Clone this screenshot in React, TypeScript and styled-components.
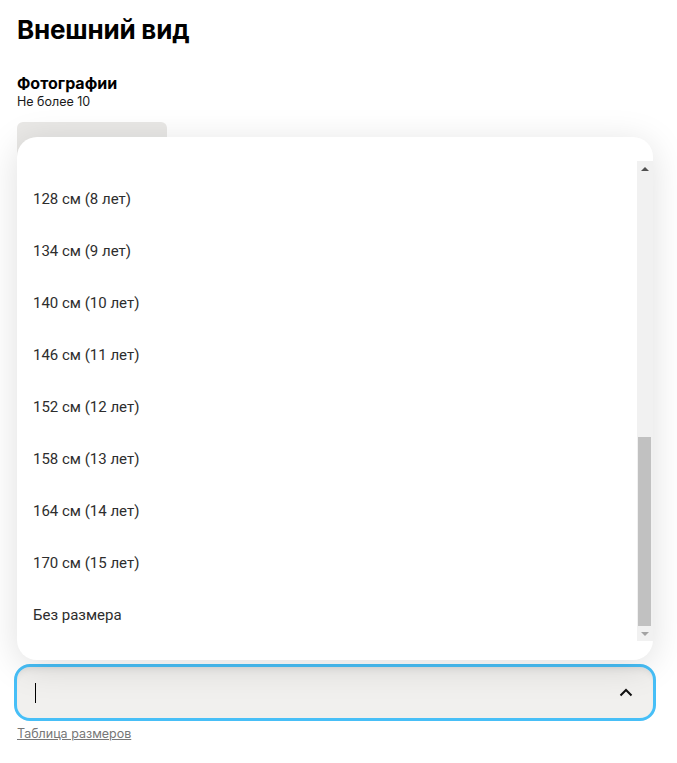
import React, { useLayoutEffect, useRef, useState } from "react";
import styled, { createGlobalStyle } from "styled-components";

const Global = createGlobalStyle`
  html, body { margin: 0; padding: 0; background: #ffffff; }
  body { font-family: Roboto, "Noto Sans", Arial, sans-serif; color: #111; }
  * { box-sizing: border-box; }
`;

const Page = styled.div`
  padding: 13px 24px 0 17px;
  width: 677px;
`;

const Title = styled.h1`
  margin: 0;
  font-family: Inter, Roboto, sans-serif;
  font-size: 26px;
  line-height: 34px;
  font-weight: 700;
  letter-spacing: -0.2px;
  color: #000;
`;

const Section = styled.section`
  margin-top: 26px;
  display: flex;
  flex-direction: column;
`;

const Label = styled.div`
  font-family: Inter, Roboto, sans-serif;
  font-size: 16px;
  line-height: 20px;
  font-weight: 700;
  color: #000;
`;

const Hint = styled.div`
  font-family: Inter, Roboto, sans-serif;
  font-size: 12.5px;
  line-height: 16px;
  color: #1a1a1a;
  margin-top: 1px;
`;

const Tile = styled.div`
  margin-top: 12px;
  width: 150px;
  height: 150px;
  border-radius: 6px;
  background: #e9e8e6;
`;

const SizeField = styled.div`
  position: relative;
  margin-top: 392px;
  display: flex;
  flex-direction: column;
`;

const Panel = styled.div`
  position: absolute;
  left: 0;
  right: 0;
  bottom: calc(100% - 3px);
  margin-bottom: 7px;
  background: #fff;
  border-radius: 20px;
  padding: 24px 0 19px 0;
  box-shadow: 0 6px 36px rgba(0, 0, 0, 0.13);
  z-index: 5;
`;

const PanelBody = styled.div`
  display: flex;
  height: 480px;
`;

const List = styled.div`
  flex: 1;
  overflow-y: scroll;
  scrollbar-width: none;
  &::-webkit-scrollbar { display: none; }
`;

const Option = styled.div`
  height: 52px;
  display: flex;
  align-items: center;
  padding-left: 16px;
  font-family: Roboto, "Noto Sans", sans-serif;
  font-size: 15px;
  color: #2d2d2d;
`;

const ScrollBar = styled.div`
  width: 16px;
  background: #f1f1f1;
  display: flex;
  flex-direction: column;
`;

const ArrowButton = styled.div`
  height: 15px;
  display: flex;
  align-items: center;
  justify-content: center;
  padding-right: 1px;
`;

const Track = styled.div`
  flex: 1;
  position: relative;
`;

const Thumb = styled.div`
  position: absolute;
  left: 1px;
  width: 13px;
  background: #c1c1c1;
`;

const Control = styled.div`
  height: 51px;
  margin-top: 3px;
  border-radius: 13px;
  background: #f1f0ee;
  outline: 3px solid #47bff7;
  box-shadow: inset 0 6px 8px -6px rgba(0, 0, 0, 0.12);
  display: flex;
  align-items: center;
  padding: 0 20px 0 18px;
`;

const Caret = styled.span`
  width: 1px;
  height: 20px;
  background: #000;
`;

const Spacer = styled.div`
  flex: 1;
`;

const Link = styled.a`
  margin-top: 8px;
  font-family: Inter, Roboto, sans-serif;
  font-size: 12.5px;
  line-height: 16px;
  color: #777;
  text-decoration: underline;
  align-self: flex-start;
  cursor: pointer;
`;

const options = [
  "50 см (0–1 мес)",
  "56 см (1–2 мес)",
  "62 см (2–3 мес)",
  "68 см (3–6 мес)",
  "74 см (6–9 мес)",
  "80 см (9–12 мес)",
  "86 см (1–1,5 года)",
  "92 см (2 года)",
  "98 см (3 года)",
  "104 см (4 года)",
  "110 см (5 лет)",
  "116 см (6 лет)",
  "122 см (7 лет)",
  "128 см (8 лет)",
  "134 см (9 лет)",
  "140 см (10 лет)",
  "146 см (11 лет)",
  "152 см (12 лет)",
  "158 см (13 лет)",
  "164 см (14 лет)",
  "170 см (15 лет)",
  "Без размера",
];

export default function App() {
  const listRef = useRef<HTMLDivElement>(null);
  const [thumb, setThumb] = useState({ top: 0, ratio: 1 });
  useLayoutEffect(() => {
    const el = listRef.current;
    if (!el) return;
    el.scrollTop = el.scrollHeight;
    const ratio = el.clientHeight / el.scrollHeight;
    const max = el.scrollHeight - el.clientHeight;
    setThumb({ top: max > 0 ? el.scrollTop / max : 0, ratio });
  }, []);
  const trackLen = 450;
  const thumbLen = Math.round(trackLen * thumb.ratio);
  const thumbTop = Math.round((trackLen - thumbLen) * thumb.top);
  return (
    <>
      <Global />
      <Page>
        <Title>Внешний вид</Title>
        <Section>
          <Label>Фотографии</Label>
          <Hint>Не более 10</Hint>
          <Tile />
        </Section>
        <SizeField>
          <Panel>
            <PanelBody>
              <List ref={listRef}>
                {options.map((o) => (
                  <Option key={o}>{o}</Option>
                ))}
              </List>
              <ScrollBar>
                <ArrowButton>
                  <svg width="8" height="4" viewBox="0 0 8 4">
                    <path d="M0 4L4 0l4 4z" fill="#505050" />
                  </svg>
                </ArrowButton>
                <Track>
                  <Thumb style={{ top: thumbTop, height: thumbLen }} />
                </Track>
                <ArrowButton>
                  <svg width="8" height="4" viewBox="0 0 8 4">
                    <path d="M0 0h8L4 4z" fill="#a3a3a3" />
                  </svg>
                </ArrowButton>
              </ScrollBar>
            </PanelBody>
          </Panel>
          <Control>
            <Caret />
            <Spacer />
            <svg width="14" height="9" viewBox="0 0 14 9" fill="none">
              <path d="M1.5 7.5L7 2l5.5 5.5" stroke="#111" strokeWidth="2" />
            </svg>
          </Control>
          <Link>Таблица размеров</Link>
        </SizeField>
      </Page>
    </>
  );
}
